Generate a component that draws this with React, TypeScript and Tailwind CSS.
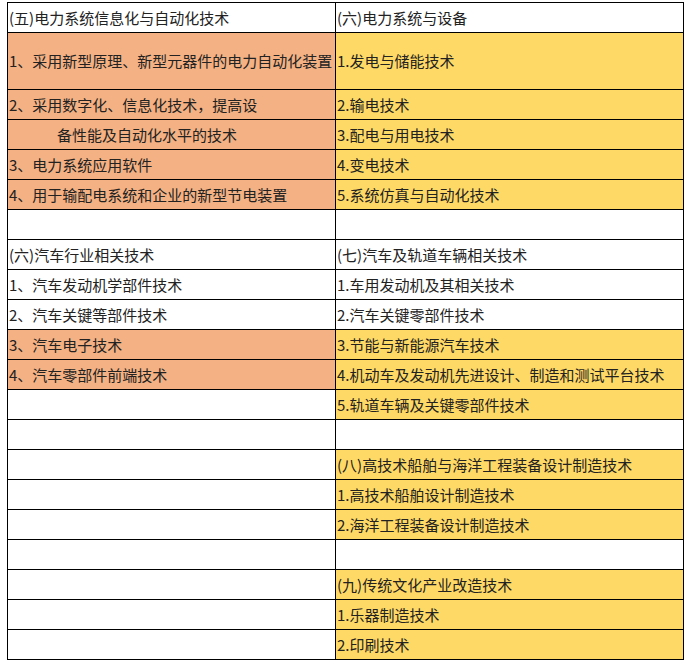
const O = "bg-[#F4B183]";
const Y = "bg-[#FFD966]";
const W = "bg-white";
type C = [string, string, boolean?];
const rows: [C, C, number?][] = [
  [["(五)电力系统信息化与自动化技术", W], ["(六)电力系统与设备", W]],
  [["1、采用新型原理、新型元器件的电力自动化装置", O], ["1.发电与储能技术", Y], 57],
  [["2、采用数字化、信息化技术，提高设", O], ["2.输电技术", Y]],
  [["备性能及自动化水平的技术", O, true], ["3.配电与用电技术", Y]],
  [["3、电力系统应用软件", O], ["4.变电技术", Y]],
  [["4、用于输配电系统和企业的新型节电装置", O], ["5.系统仿真与自动化技术", Y]],
  [["", W], ["", W]],
  [["(六)汽车行业相关技术", W], ["(七)汽车及轨道车辆相关技术", W]],
  [["1、汽车发动机学部件技术", W], ["1.车用发动机及其相关技术", W]],
  [["2、汽车关键等部件技术", W], ["2.汽车关键零部件技术", W]],
  [["3、汽车电子技术", O], ["3.节能与新能源汽车技术", Y]],
  [["4、汽车零部件前端技术", O], ["4.机动车及发动机先进设计、制造和测试平台技术", Y]],
  [["", W], ["5.轨道车辆及关键零部件技术", Y]],
  [["", W], ["", W]],
  [["", W], ["(八)高技术船舶与海洋工程装备设计制造技术", Y]],
  [["", W], ["1.高技术船舶设计制造技术", Y]],
  [["", W], ["2.海洋工程装备设计制造技术", Y]],
  [["", W], ["", W]],
  [["", W], ["(九)传统文化产业改造技术", Y]],
  [["", W], ["1.乐器制造技术", Y]],
  [["", W], ["2.印刷技术", Y]],
];
export default function App() {
  return (
    <div className="bg-white w-[688px] h-[664px] pt-[2px] pl-[7px]" style={{ fontFamily: '"Noto Sans CJK SC", sans-serif' }}>
      <div className="w-[677px] border-t border-l border-black text-[15px] leading-[24px] text-[#222]">
        {rows.map(([a, b, h], i) => (
          <div key={i} className="grid grid-cols-[328px_348px]" style={{ height: h ?? 30 }}>
            {[a, b].map((c, j) => (
              <div key={j} className={`${c[1]} border-r border-b border-black flex items-center px-[1px] overflow-hidden ${c[2] ? "pl-[49px]" : ""}`}>
                <span className="whitespace-normal break-all">{c[0]}</span>
              </div>
            ))}
          </div>
        ))}
      </div>
    </div>
  );
}
